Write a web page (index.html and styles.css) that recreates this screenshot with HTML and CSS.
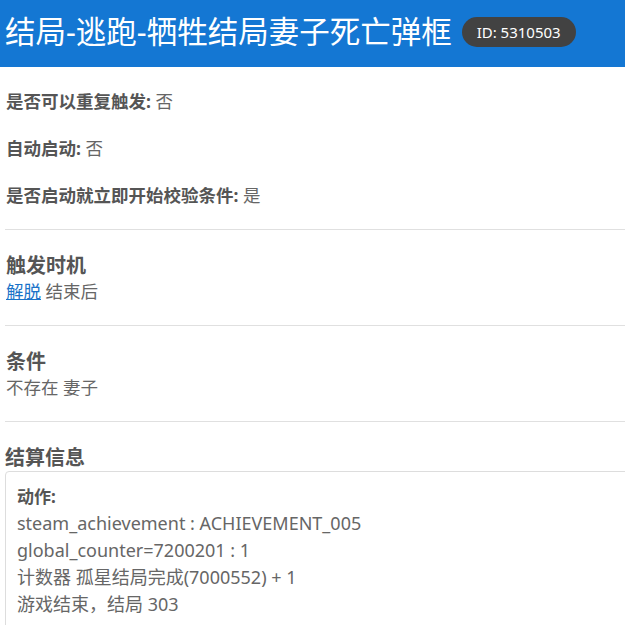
FILE: index.html
```html
<!DOCTYPE html>
<html>
  <head>
    <meta charset="utf-8">
    <meta name="viewport" content="width=device-width, initial-scale=1" />
    <title>结局-逃跑-牺牲结局妻子死亡弹框</title>
    <link rel="stylesheet" href="styles.css">
  </head>
  <body>
    <header class="page-header">
      <h1 class="page-title">结局-逃跑-牺牲结局妻子死亡弹框</h1>
      <span class="id-badge">ID: 5310503</span>
    </header>
    <main class="content">
      <section class="section props">
        <p class="prop"><b>是否可以重复触发:</b> 否</p>
        <p class="prop"><b>自动启动:</b> 否</p>
        <p class="prop"><b>是否启动就立即开始校验条件:</b> 是</p>
      </section>
      <section class="section">
        <h2 class="section-title">触发时机</h2>
        <p class="section-text"><a href="#">解脱</a> 结束后</p>
      </section>
      <section class="section">
        <h2 class="section-title">条件</h2>
        <p class="section-text">不存在 妻子</p>
      </section>
      <section class="section last">
        <h2 class="section-title">结算信息</h2>
        <div class="result-box">
          <p class="result-label">动作:</p>
          <p>steam_achievement : ACHIEVEMENT_005</p>
          <p>global_counter=7200201 : 1</p>
          <p>计数器 孤星结局完成(7000552) + 1</p>
          <p>游戏结束，结局 303</p>
        </div>
      </section>
    </main>
  </body>
</html>
```
FILE: styles.css
```css
* {
  box-sizing: border-box;
  margin: 0;
  padding: 0;
}
body {
  font-family: "Noto Sans", "Noto Sans CJK SC", sans-serif;
  font-size: 17.5px;
  color: #666;
  background: #fff;
}
.page-header {
  display: flex;
  align-items: center;
  gap: 10px;
  height: 67px;
  padding: 0 0 4px 5px;
  background-color: #1477d3;
  color: #fff;
}
.page-title {
  font-size: 30.5px;
  font-weight: normal;
  line-height: 1.2;
  white-space: nowrap;
}
.id-badge {
  display: inline-block;
  padding: 0 15px;
  height: 30px;
  line-height: 30px;
  border-radius: 15px;
  background-color: #424242;
  font-size: 15px;
  white-space: nowrap;
}
.content {
  margin-left: 5px;
}
.section {
  padding: 23px 0 22px 1px;
  border-bottom: 1px solid #e0e0e0;
}
.section.last {
  border-bottom: none;
  padding-left: 0;
}
.props {
  display: flex;
  flex-direction: column;
  gap: 23px;
  padding-top: 22px;
}
.prop {
  line-height: 24px;
}
.prop b,
.result-label {
  color: #555;
  font-weight: bold;
}
.section-title {
  font-size: 20px;
  font-weight: bold;
  line-height: 26px;
  color: #555;
}
.section-title + .section-text {
  line-height: 24px;
}
.section-text a {
  color: #1a73c8;
}
.result-box {
  width: 640px;
  padding: 11px 11px 12px;
  border: 1px solid #ddd;
  border-radius: 4px;
  font-size: 18px;
  line-height: 27px;
}
.result-label {
  font-size: 17px;
}
```
